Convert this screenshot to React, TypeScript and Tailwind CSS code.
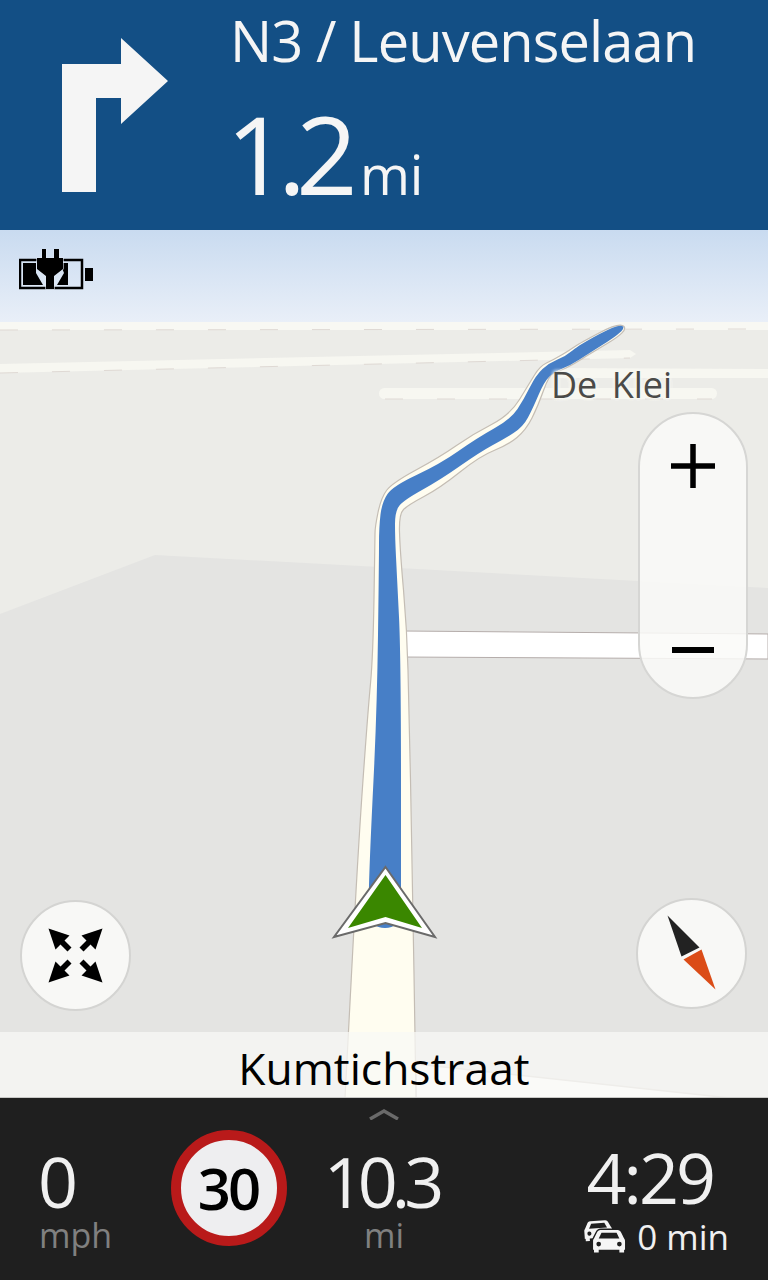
import React from "react";

const font = "font-['Open_Sans','Noto_Sans',sans-serif]";

type P = [number, number];

function smooth(pts: P[]) {
  let d = `M${pts[0][0]} ${pts[0][1]}`;
  for (let i = 1; i < pts.length - 1; i++) {
    const mx = (pts[i][0] + pts[i + 1][0]) / 2;
    const my = (pts[i][1] + pts[i + 1][1]) / 2;
    d += ` Q${pts[i][0]} ${pts[i][1]} ${mx} ${my}`;
  }
  const l = pts[pts.length - 1];
  return d + ` L${l[0]} ${l[1]} Z`;
}

const roadPts: P[] = [
  [345, 1098], [345, 1098], [358, 850], [368, 710], [373, 657], [375, 540], [375, 527], [381, 498], [392, 483], [440, 457],
  [473, 434], [510, 415], [529, 384], [540, 366], [553, 360], [570, 350], [580, 343], [620, 322], [628, 331],
  [588, 355], [574, 364], [558, 372], [549, 375], [538, 406], [526, 430], [508, 445], [480, 456], [440, 488],
  [408, 505], [399, 514], [400, 550], [407, 630], [409, 710], [412, 850], [416, 1098], [416, 1098],
];

const routePts: P[] = [
  [368, 920], [368, 920], [370, 850], [377, 710], [379, 560], [379, 527], [382, 502], [393, 486], [440, 464],
  [477, 438], [511, 419], [524, 399], [536, 375], [549, 363], [566, 356], [579, 345], [620, 323], [626, 330],
  [588, 354], [571, 365], [554, 372], [544, 382], [533, 408], [523, 427], [504, 439], [480, 452], [440, 480],
  [404, 500], [395, 511], [395, 537], [397, 577], [401, 657], [401, 920], [401, 920], [392, 928], [378, 928], [368, 920],
];

function TurnArrow() {
  return (
    <svg width="190" height="230" viewBox="0 0 190 230" className="shrink-0">
      <polygon fill="#f5f5f5" points="62,64 121,64 121,38 168,81 121,124 121,98 96,98 96,192 62,192" />
    </svg>
  );
}

function BatteryIcon() {
  return (
    <svg width="76" height="42" viewBox="19 249 76 42" className="block">
      <rect x="20" y="260" width="62" height="28" fill="none" stroke="#000" strokeWidth="2.5" />
      <polygon points="23,263 36,263 36,273 43,285 23,285" fill="#000" />
      <polygon points="60,263 68,263 68,285 57,285 64,273" fill="#000" />
      <rect x="85" y="268" width="8" height="13" fill="#000" />
      <path d="M42 249h4v9h8v-9h5v9h4v11l-9 7v13h-8v-13l-9-7v-11h5z" fill="#000" stroke="#dfe8f5" strokeWidth="1.2" paintOrder="stroke" />
    </svg>
  );
}

function MapDrawing() {
  const dash = { stroke: "#dfd9d4", strokeWidth: 1, strokeDasharray: "18 34" };
  return (
    <svg viewBox="0 322 768 775" width="768" height="775" className="block">
      <rect x="0" y="322" width="768" height="776" fill="#ecece8" />
      <polygon points="0,614 155,555 768,588 768,1098 0,1098" fill="#e4e4e2" />
      <rect x="0" y="322" width="768" height="8" fill="#f8f8f3" />
      <line x1="0" y1="330" x2="768" y2="329" {...dash} />
      <polygon points="0,364 630,350 636,354 630,358 0,373" fill="#f7f7f1" />
      <line x1="0" y1="373" x2="630" y2="358" {...dash} />
      <polygon points="555,368 768,369 768,378 555,378" fill="#f7f7f1" />
      <rect x="379" y="388" width="338" height="11" rx="5.5" fill="#f7f7f1" />
      <line x1="385" y1="399" x2="712" y2="399" {...dash} />
      <polygon points="402,631 768,634 768,659 402,657" fill="#ffffff" stroke="#b5adab" strokeWidth="1" />
      <polygon points="416,1064 730,1098 416,1098" fill="#ffffff" stroke="#cfc9c6" strokeWidth="1.5" />
      <path d={smooth(roadPts)} fill="#fffdf0" stroke="#c4bdb4" strokeWidth="1.2" />
      <path d={smooth(routePts)} fill="#477fc7" />
      <polygon points="385.5,867 435,937 385.5,923 334,937" fill="#ffffff" stroke="#6a6a6a" strokeWidth="2" />
      <polygon points="385.5,875 422,928 385.5,917 348,928" fill="#3a8700" />
    </svg>
  );
}

function ExpandIcon() {
  const arrow = "-27,-27 -6,-20 -11,-15 -4,-8 -8,-4 -15,-11 -20,-6";
  return (
    <svg width="60" height="60" viewBox="-29.5 -29.5 60 60">
      <polygon points={arrow} fill="#000" />
      <polygon points={arrow} fill="#000" transform="scale(-1,1)" />
      <polygon points={arrow} fill="#000" transform="scale(1,-1)" />
      <polygon points={arrow} fill="#000" transform="scale(-1,-1)" />
    </svg>
  );
}

function CompassIcon() {
  return (
    <svg width="60" height="80" viewBox="662.5 914.5 60 80">
      <polygon points="668,916 700,948 682,957" fill="#222222" />
      <polygon points="702,950 716,990 684,960" fill="#db4c17" />
    </svg>
  );
}

function Car({ x, y, s, outline }: { x: number; y: number; s: number; outline?: boolean }) {
  return (
    <g transform={`translate(${x} ${y}) scale(${s})`}>
      <path
        d="M7 1h18c2 0 3 1 4 3l3 6c1 1 1 2 1 3v9h-1v3h-5v-3H5v3H0v-3h-1v-9c0-1 0-2 1-3l3-6c1-2 2-3 4-3z"
        fill="#f5f5f5"
        stroke={outline ? "#1f1f1f" : "none"}
        strokeWidth={outline ? 3 : 0}
        paintOrder="stroke"
      />
      <path d="M8 4h16l3 6H5z" fill="#1f1f1f" />
      <circle cx="5" cy="16" r="2.5" fill="#1f1f1f" />
      <circle cx="27" cy="16" r="2.5" fill="#1f1f1f" />
    </g>
  );
}

function TrafficIcon() {
  return (
    <svg width="44" height="36" viewBox="0 0 44 36" className="shrink-0">
      <g transform="rotate(-4 14 10)">
        <Car x={2} y={1} s={0.82} />
      </g>
      <Car x={11} y={10} s={0.94} outline />
    </svg>
  );
}

export default function App() {
  return (
    <div className={`w-[768px] h-[1280px] flex flex-col overflow-hidden bg-[#1f1f1f] ${font}`}>
      <header className="h-[230px] shrink-0 bg-[#134f85] flex text-[#f5f5f5]">
        <div className="w-[190px] shrink-0">
          <TurnArrow />
        </div>
        <div className="flex flex-col pl-[40px]">
          <div className="h-[82px] text-[56px] leading-[80px] font-[380] tracking-[-0.9px] whitespace-nowrap">N3 / Leuvenselaan</div>
          <div className="flex items-baseline pt-[17px]">
            <span className="text-[108px] leading-[110px] font-[380] tracking-[-10px] -ml-[4px]">1.2</span>
            <span className="text-[54px] leading-[110px] font-[380] ml-[12px]">mi</span>
          </div>
        </div>
      </header>

      <main className="relative h-[867px] shrink-0 flex flex-col overflow-hidden">
        <div className="h-[92px] shrink-0 bg-gradient-to-b from-[#c9dbf0] to-[#e9eff8] pt-[19px] pl-[19px]">
          <BatteryIcon />
        </div>
        <MapDrawing />

        <div className="absolute left-[551px] top-[135px] text-[36px] leading-[40px] text-[#4a4a48] whitespace-nowrap [word-spacing:5px] [text-shadow:0_0_4px_#f7f7f1,0_0_4px_#f7f7f1,0_0_4px_#f7f7f1]">
          De Klei
        </div>

        <div className="absolute left-[638px] top-[182px] w-[110px] h-[287px] rounded-full border-2 border-[#d6d6d4] bg-[#fafaf8]/85 flex flex-col items-center justify-between pt-[30px] pb-[44px]">
          <svg width="44" height="44" viewBox="0 0 44 44">
            <path d="M22 0v44M0 22h44" stroke="#000" strokeWidth="5.5" />
          </svg>
          <div className="w-[42px] h-[6px] bg-black" />
        </div>

        <div className="absolute left-[20px] top-[670px] w-[111px] h-[111px] rounded-full border-2 border-[#d4d4d2] bg-[#f8f8f6] flex items-center justify-center">
          <ExpandIcon />
        </div>
        <div className="absolute left-[636px] top-[668px] w-[111px] h-[111px] rounded-full border-2 border-[#d4d4d2] bg-[#f8f8f6] flex items-center justify-center">
          <CompassIcon />
        </div>

        <div className="absolute left-0 right-0 bottom-0 h-[65px] bg-[#f8f8f6]/75 flex items-center justify-center text-black text-[44.4px] leading-[64px]">
          <span className="whitespace-nowrap pt-[6px]">Kumtichstraat</span>
        </div>
      </main>

      <footer className="relative flex-1 border-t border-[#c8c8c6] flex text-[#f0f0f0]">
        <svg width="32" height="12" viewBox="0 0 32 12" className="absolute left-[368px] top-[10px]">
          <path d="M2 11L16 3l14 8" fill="none" stroke="#6a6a6a" strokeWidth="3.5" />
        </svg>

        <div className="w-[171px] shrink-0 pl-[39px] pt-[51px] flex flex-col">
          <span className="text-[70px] leading-[64px] font-[380] -ml-[1px]">0</span>
          <span className="text-[34px] leading-[40px] text-[#808080] font-[380] mt-[2px]">mph</span>
        </div>

        <div className="w-[116px] shrink-0 pt-[32px]">
          <div className="w-[116px] h-[116px] rounded-full border-[10px] border-[#b91a1a] bg-[#eeeef0] flex items-center justify-center">
            <span className="text-[58px] font-semibold leading-none tracking-[-3px] text-black -ml-[2px]">30</span>
          </div>
        </div>

        <div className="ml-[39px] w-[116px] shrink-0 pt-[51px] flex flex-col items-center">
          <span className="text-[70px] leading-[64px] font-[380] tracking-[-6px] whitespace-nowrap mr-[6px]">10.3</span>
          <span className="text-[34px] leading-[40px] text-[#808080] font-[380] mt-[2px]">mi</span>
        </div>

        <div className="flex-1 pt-[47px] flex flex-col items-end pr-[39px]">
          <span className="text-[70px] leading-[64px] font-[380] tracking-[-3px] mr-[16px]">4:29</span>
          <div className="flex items-center gap-[10px] mt-[8px]">
            <TrafficIcon />
            <span className="text-[35px] leading-[40px] font-[380] whitespace-nowrap">0 min</span>
          </div>
        </div>
      </footer>
    </div>
  );
}
